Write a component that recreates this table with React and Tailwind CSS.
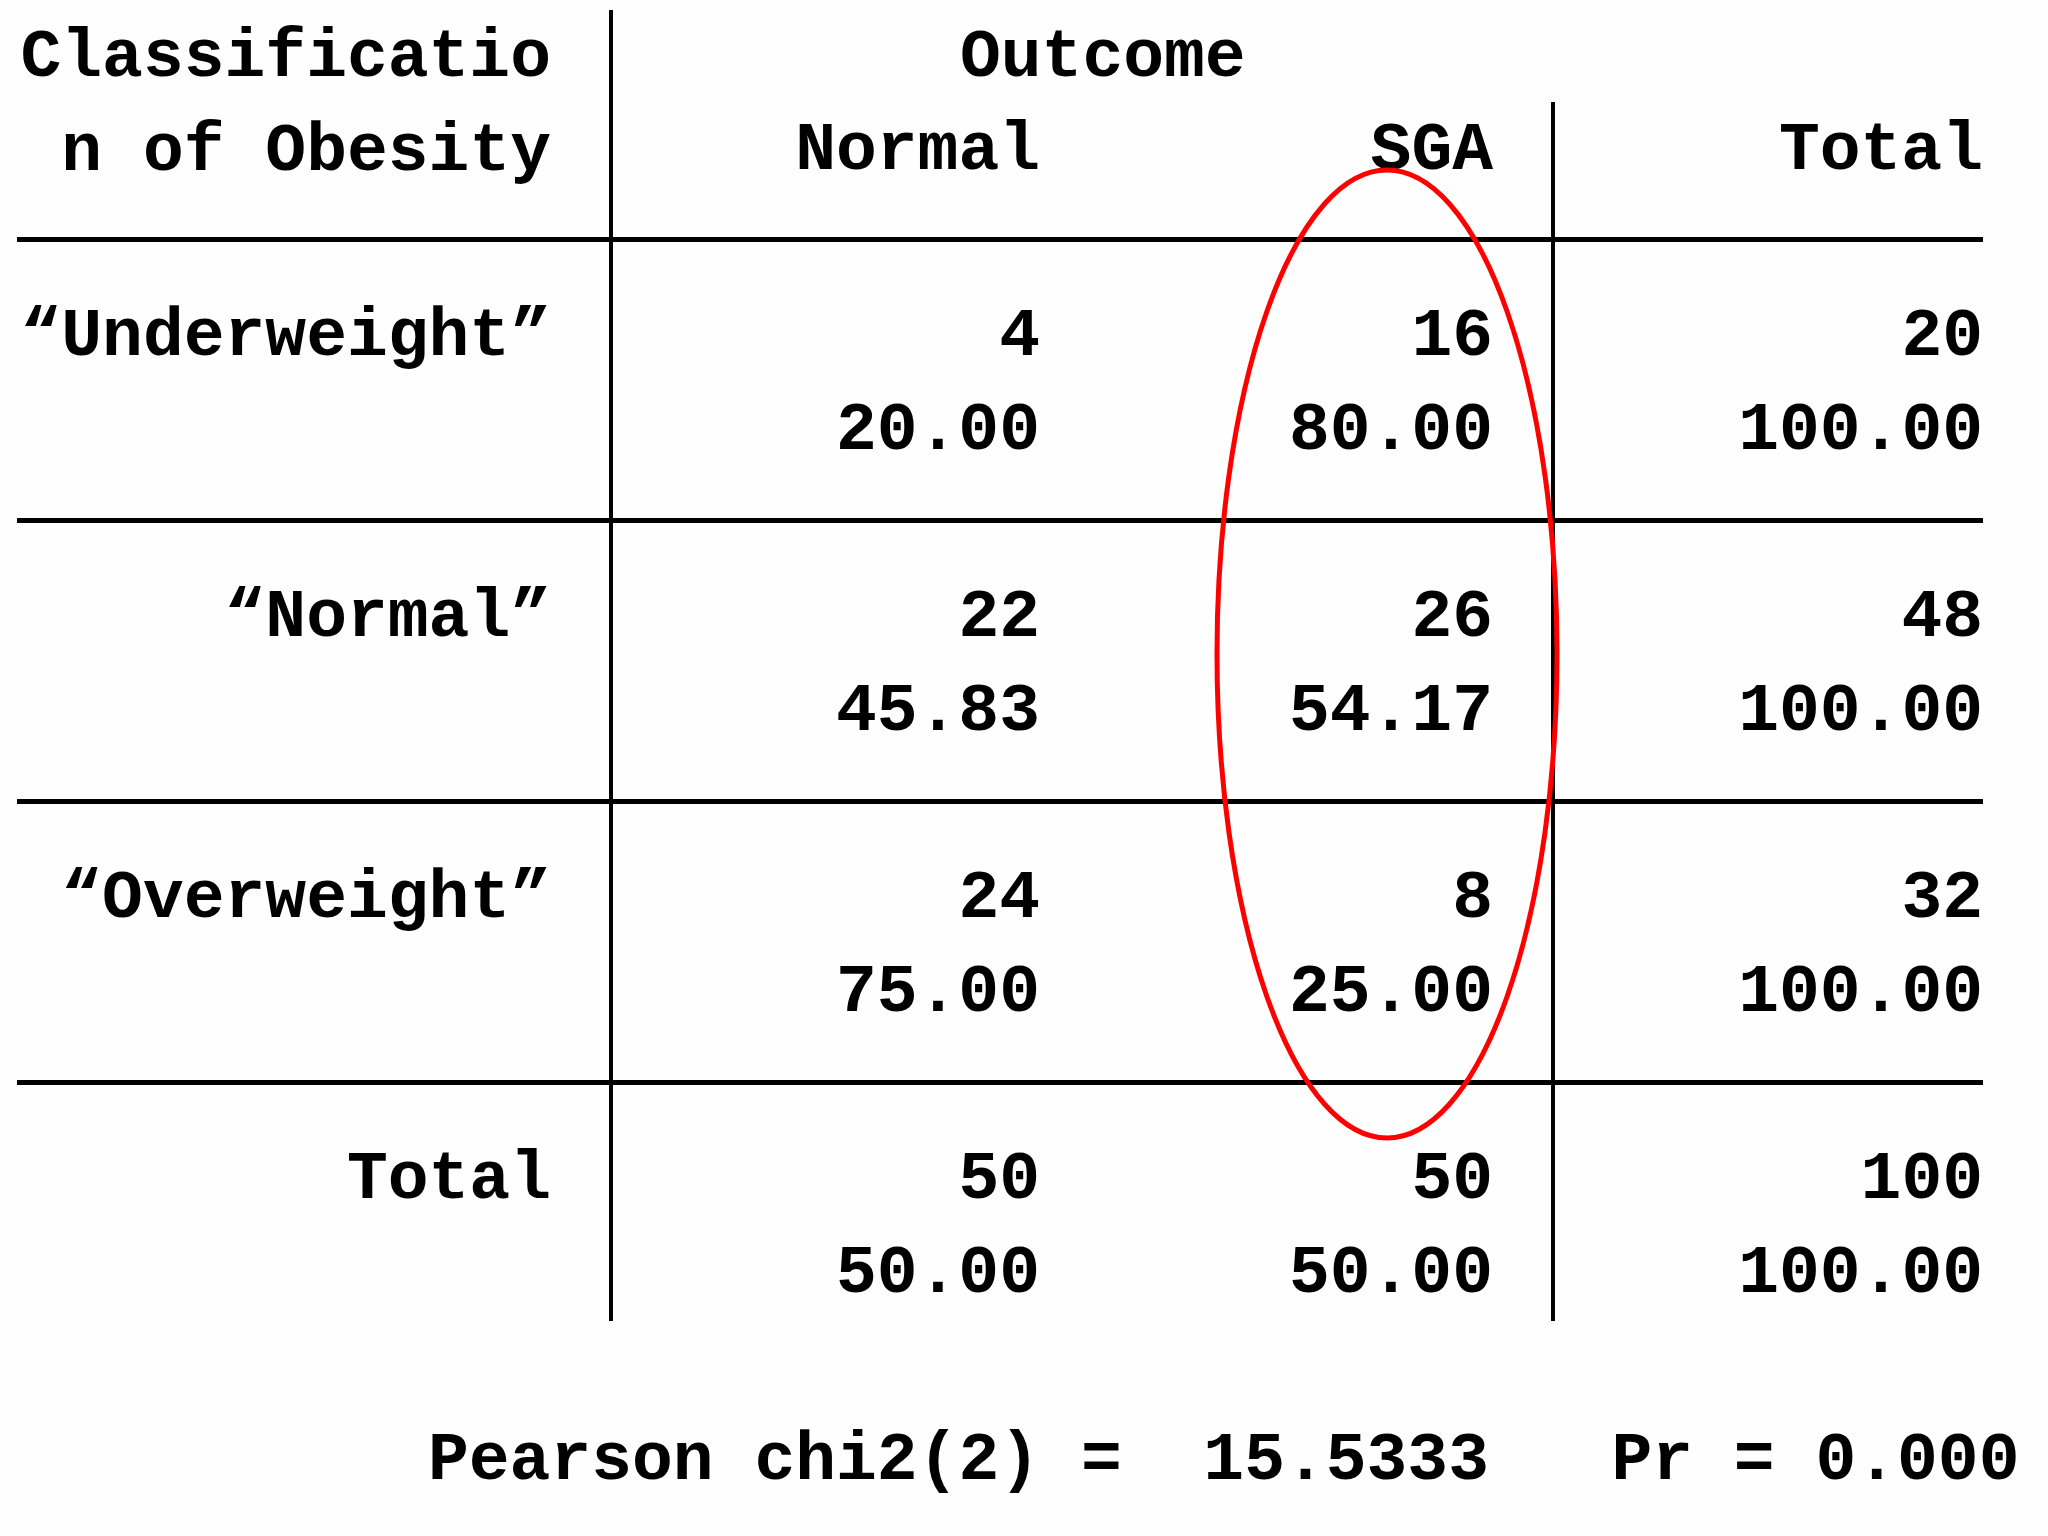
const rows = [
  { label: "“Underweight”", n: ["4", "16", "20"], p: ["20.00", "80.00", "100.00"] },
  { label: "“Normal”", n: ["22", "26", "48"], p: ["45.83", "54.17", "100.00"] },
  { label: "“Overweight”", n: ["24", "8", "32"], p: ["75.00", "25.00", "100.00"] },
];

function Cells({ label, n, p, last }) {
  return (
    <div
      className={
        "grid grid-cols-[596px_487px_455px_428px] border-t-[5px] border-black " +
        (last ? "h-[239px]" : "h-[281px]")
      }
    >
      <div className="border-r-4 border-black pr-[58px] pt-[48px] text-right whitespace-pre">{label}</div>
      <div className="pr-[60px] pt-[48px] text-right">
        <div>{n[0]}</div>
        <div>{p[0]}</div>
      </div>
      <div className="border-r-4 border-black pr-[58px] pt-[48px] text-right">
        <div>{n[1]}</div>
        <div>{p[1]}</div>
      </div>
      <div className="pt-[48px] text-right">
        <div>{n[2]}</div>
        <div>{p[2]}</div>
      </div>
    </div>
  );
}

export default function App() {
  return (
    <div className="relative w-[2048px] h-[1536px] overflow-hidden bg-[#fefefe] text-black font-['Liberation_Mono','Courier_New',monospace] font-bold text-[68px] leading-[94px]">
      <div className="pt-[10px] pl-[17px]">
        <div className="w-[1966px]">
          <div className="grid grid-cols-[596px_487px_455px_428px] grid-rows-[92px_135px]">
            <div className="row-span-2 border-r-4 border-black pr-[58px] pt-[1px] text-right whitespace-pre">
              <div>Classificatio</div>
              <div>n of Obesity</div>
            </div>
            <div className="col-span-2 pl-[347px] pt-[1px]">Outcome</div>
            <div></div>
            <div className="pr-[60px] pt-[2px] text-right">Normal</div>
            <div className="border-r-4 border-black pr-[58px] pt-[2px] text-right">SGA</div>
            <div className="pt-[2px] text-right">Total</div>
          </div>
          {rows.map((r) => (
            <Cells key={r.label} {...r} />
          ))}
          <Cells label="Total" n={["50", "50", "100"]} p={["50.00", "50.00", "100.00"]} last />
        </div>
        <div className="mt-[95px] ml-[411px] whitespace-pre">Pearson chi2(2) =  15.5333   Pr = 0.000</div>
      </div>
      <svg className="pointer-events-none absolute inset-0" width="2048" height="1536" viewBox="0 0 2048 1536">
        <ellipse cx="1387" cy="654" rx="170" ry="484" fill="none" stroke="#ff0000" strokeWidth="5" />
      </svg>
    </div>
  );
}
